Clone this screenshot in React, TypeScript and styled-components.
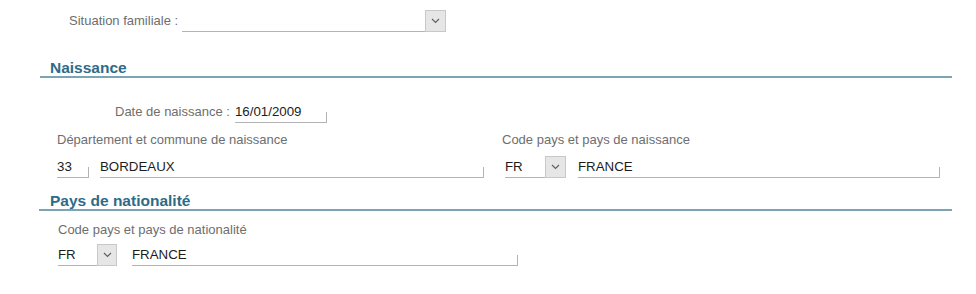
import styled, { createGlobalStyle } from 'styled-components';

const GlobalStyle = createGlobalStyle`
    body {
        margin: 0;
        background: #ffffff;
        font-family: 'Liberation Sans', Arial, sans-serif;
    }
`;

const Page = styled.div`
    width: 976px;
    height: 294px;
    padding-top: 9px;
    box-sizing: border-box;
    display: flex;
    flex-direction: column;
`;

const Row = styled.div<{ $indent: number; $top?: number }>`
    display: flex;
    align-items: flex-end;
    margin-left: ${(p) => p.$indent}px;
    margin-top: ${(p) => p.$top ?? 0}px;
`;

const InlineLabel = styled.span<{ $gap: number }>`
    font-size: 13px;
    color: #6e6e6e;
    line-height: 23px;
    margin-right: ${(p) => p.$gap}px;
    white-space: nowrap;
`;

const CaptionLabel = styled.div<{ $top?: number }>`
    font-size: 13px;
    color: #6e6e6e;
    line-height: 14px;
    white-space: nowrap;
    margin-top: ${(p) => p.$top ?? 0}px;
`;

const Field = styled.div<{ $width: number; $tick?: boolean }>`
    position: relative;
    width: ${(p) => p.$width}px;
    height: 22px;
    box-sizing: content-box;
    border-bottom: 1px solid #b3b3b3;
    display: flex;
    align-items: center;
    font-size: 13.3px;
    color: #1c1c1c;
    white-space: nowrap;
    &::after {
        content: '';
        display: ${(p) => (p.$tick ? 'block' : 'none')};
        position: absolute;
        right: 0;
        bottom: -1px;
        width: 1px;
        height: 11px;
        background: #b3b3b3;
    }
`;

const DropButton = styled.div<{ $width: number }>`
    width: ${(p) => p.$width}px;
    height: 22px;
    box-sizing: border-box;
    background: #e6e6e6;
    border: 1px solid #c8c8c8;
    display: flex;
    align-items: center;
    justify-content: center;
`;

const Section = styled.div<{ $top: number; $left: number }>`
    margin-top: ${(p) => p.$top}px;
    margin-left: ${(p) => p.$left}px;
    margin-right: 24px;
    padding-left: ${(p) => 50 - p.$left}px;
    border-bottom: 2px solid #7ba4b5;
    font-size: 15.5px;
    font-weight: bold;
    line-height: 16px;
    color: #2d6b88;
`;

const Columns = styled.div`
    display: flex;
    margin-top: 10px;
`;

const Column = styled.div<{ $left: number }>`
    display: flex;
    flex-direction: column;
    margin-left: ${(p) => p.$left}px;
`;

const FieldGroup = styled.div<{ $top: number }>`
    display: flex;
    align-items: flex-end;
    margin-top: ${(p) => p.$top}px;
`;

const Spacer = styled.div<{ $w: number }>`
    width: ${(p) => p.$w}px;
    flex: none;
`;

const Chevron = () => (
    <svg width="9" height="6" viewBox="0 0 9 6">
        <path d="M1 1 L4.5 4.5 L8 1" fill="none" stroke="#606060" strokeWidth="1.2" />
    </svg>
);

export default function App() {
    return (
        <>
            <GlobalStyle />
            <Page>
                <Row $indent={69}>
                    <InlineLabel $gap={4}>Situation familiale :</InlineLabel>
                    <Field $width={243} />
                    <DropButton $width={21}>
                        <Chevron />
                    </DropButton>
                </Row>

                <Section $top={28} $left={40}>
                    Naissance
                </Section>

                <Row $indent={115} $top={22}>
                    <InlineLabel $gap={5}>Date de naissance :</InlineLabel>
                    <Field $width={92} $tick>
                        16/01/2009
                    </Field>
                </Row>

                <Columns>
                    <Column $left={57}>
                        <CaptionLabel>Département et commune de naissance</CaptionLabel>
                        <FieldGroup $top={8}>
                            <Field $width={32} $tick>
                                33
                            </Field>
                            <Spacer $w={11} />
                            <Field $width={384} $tick>
                                BORDEAUX
                            </Field>
                        </FieldGroup>
                    </Column>
                    <Column $left={18}>
                        <CaptionLabel>Code pays et pays de naissance</CaptionLabel>
                        <FieldGroup $top={8}>
                            <Spacer $w={3} />
                            <Field $width={40}>FR</Field>
                            <DropButton $width={21}>
                                <Chevron />
                            </DropButton>
                            <Spacer $w={12} />
                            <Field $width={362} $tick>
                                FRANCE
                            </Field>
                        </FieldGroup>
                    </Column>
                </Columns>

                <Section $top={15} $left={39}>
                    Pays de nationalité
                </Section>

                <Column $left={58}>
                    <CaptionLabel $top={12}>Code pays et pays de nationalité</CaptionLabel>
                    <FieldGroup $top={6}>
                        <Field $width={39}>FR</Field>
                        <DropButton $width={20}>
                            <Chevron />
                        </DropButton>
                        <Spacer $w={15} />
                        <Field $width={386} $tick>
                            FRANCE
                        </Field>
                    </FieldGroup>
                </Column>
            </Page>
        </>
    );
}
